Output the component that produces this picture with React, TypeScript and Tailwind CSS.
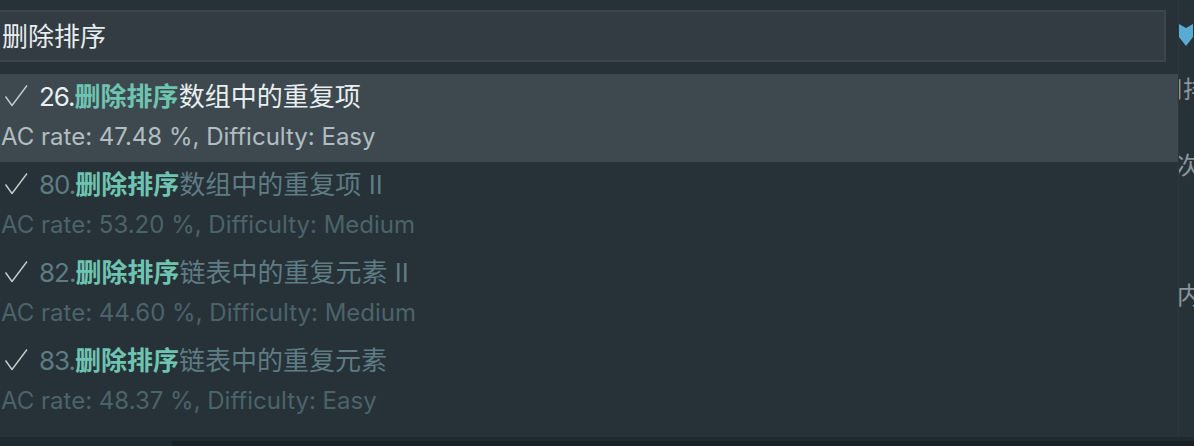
import React from 'react';

interface Item {
    id: number;
    rest: string;
    rate: string;
    level: string;
}

const items: Item[] = [
    { id: 26, rest: '数组中的重复项', rate: '47.48', level: 'Easy' },
    { id: 80, rest: '数组中的重复项 II', rate: '53.20', level: 'Medium' },
    { id: 82, rest: '链表中的重复元素 II', rate: '44.60', level: 'Medium' },
    { id: 83, rest: '链表中的重复元素', rate: '48.37', level: 'Easy' },
];

const font = 'font-["Inter","Noto_Sans_CJK_SC",sans-serif]';

const Check = () => (
    <svg width="24" height="26" viewBox="0 0 24 26" fill="none" className="shrink-0">
        <path d="M1.5 12.5 L8 21.5 L23 1.5" stroke="#c5ccd0" strokeWidth="1.4" strokeLinejoin="round" />
    </svg>
);

const Row = ({ item, active }: { item: Item; active: boolean }) => (
    <div className={`h-[88px] flex flex-col pt-[6px] ${active ? 'bg-[#3d494f]' : ''}`}>
        <div className="flex items-center h-[34px] pl-[4px] gap-[11px]">
            <Check />
            <span className={`text-[26px] leading-none ${active ? 'text-[#e9eef0]' : 'text-[#5f7b83]'}`}>
                <span className="tracking-[-1px]">{item.id}.</span>
                <span className="font-bold text-[#6fc4b1]">删除排序</span>
                {item.rest}
            </span>
        </div>
        <div
            className={`h-[46px] flex items-center pl-[1px] text-[24px] leading-none ${
                active ? 'text-[#b2bdc1]' : 'text-[#4d636a]'
            }`}
        >
            AC rate: {item.rate} %, Difficulty: {item.level}
        </div>
    </div>
);

export default function App() {
    return (
        <div className={`w-[1194px] h-[446px] flex flex-col bg-[#263238] overflow-hidden ${font}`}>
            <div className="flex flex-1 min-h-0">
                <div className="w-[1178px] flex flex-col">
                    <div className="pt-[10px] pr-[12px]">
                        <div className="-ml-[4px] h-[52px] flex items-center pl-[4px] bg-[#323c42] border-2 border-[#3c474d] text-[26px] text-[#e8edef]">
                            删除排序
                        </div>
                    </div>
                    <div className="mt-[12px] flex flex-col">
                        {items.map((item, i) => (
                            <Row key={item.id} item={item} active={i === 0} />
                        ))}
                    </div>
                </div>
                <div className="w-[16px] bg-[#273238] border-l border-[#2c373d] flex flex-col overflow-hidden text-[24px] text-[#8b979c] leading-none">
                    <svg width="14" height="22" viewBox="0 0 14 22" className="mt-[24px] shrink-0">
                        <polygon points="0,0 7,4 14,0 14,13 7,22 0,13" fill="#5aabd3" />
                    </svg>
                    <div className="mt-[32px] -ml-[20px] whitespace-nowrap">用排</div>
                    <div className="mt-[52px] -ml-[3px] whitespace-nowrap">次</div>
                    <div className="mt-[106px] -ml-[2px] whitespace-nowrap">内</div>
                </div>
            </div>
            <div className="h-[9px] flex">
                <div className="w-[172px] bg-[#1f2a30]" />
                <div className="flex-1 flex flex-col">
                    <div className="h-[4px] bg-[#1f2a30]" />
                    <div className="flex-1 bg-[#182125]" />
                </div>
            </div>
        </div>
    );
}
